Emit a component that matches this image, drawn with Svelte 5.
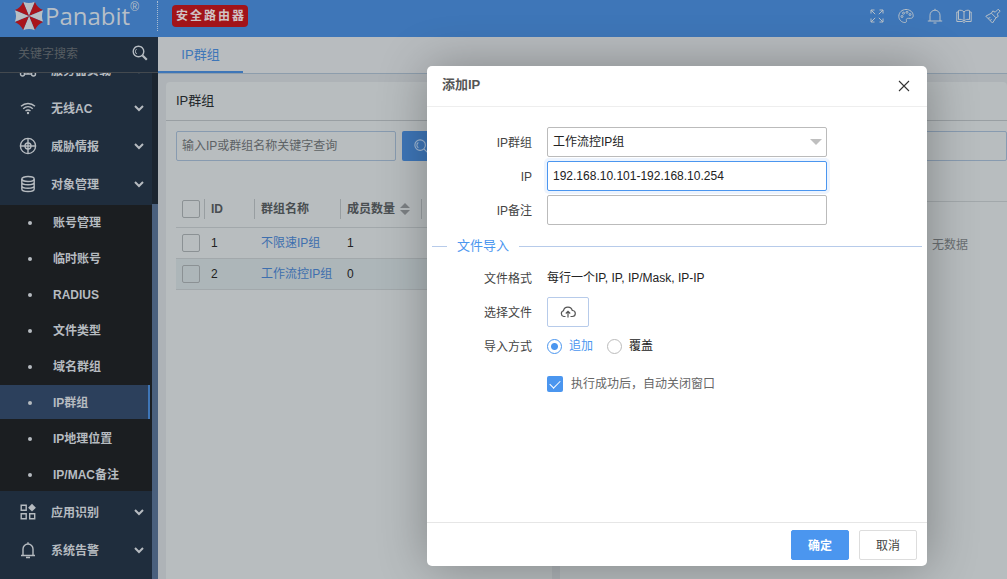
<script>
  let keyword = $state('');
  let groupKeyword = $state('');
  let remoteKeyword = $state('');
  let group = $state('工作流控IP组');
  let address = $state('192.168.10.101-192.168.10.254');
  let remark = $state('');
  let mode = $state('append');
  let autoClose = $state(true);

  const subItems = ['账号管理', '临时账号', 'RADIUS', '文件类型', '域名群组', 'IP群组', 'IP地理位置', 'IP/MAC备注'];
  const groups = [
    { id: 1, name: '不限速IP组', count: 1 },
    { id: 2, name: '工作流控IP组', count: 0 }
  ];
  // Eight wedges of the umbrella logo, one every 45 degrees.
  const wedges = [0, 45, 90, 135, 180, 225, 270, 315];
</script>

{#snippet arrow()}
  <svg class="arrow" viewBox="0 0 10 10" width="10" height="10"><path d="M1 3l4 4 4-4" fill="none" stroke="currentColor" stroke-width="2" /></svg>
{/snippet}

{#snippet item(icon, label)}
  <a class="item" href="#menu">
    <svg class="ico" viewBox="0 0 18 18" width="18" height="18" fill="none" stroke="currentColor" stroke-width="1.4">
      {#if icon === 'load'}
        <circle cx="3.5" cy="13" r="2" /><circle cx="14.5" cy="13" r="2" /><path d="M5.500 13h7M9 13V6M6 3h6v3H6z" />
      {:else if icon === 'wifi'}
        <path d="M2 7.300c4-3.800 10-3.800 14 0M4.200 9.700c2.800-2.600 6.800-2.600 9.600 0M6.500 12c1.500-1.300 3.500-1.300 5 0" /><circle cx="9" cy="14" r="1.200" fill="currentColor" stroke="none" />
      {:else if icon === 'globe'}
        <circle cx="9" cy="9" r="7.600" /><circle cx="9" cy="9" r="3" /><path d="M9 1.400v15.200M1.400 9h15.200" />
      {:else if icon === 'data'}
        <ellipse cx="9" cy="4" rx="6.200" ry="2.500" /><path d="M2.800 4v10c0 3.300 12.400 3.300 12.400 0V4M2.800 7.300c0 3.300 12.400 3.300 12.400 0M2.800 10.700c0 3.300 12.400 3.300 12.400 0" />
      {:else if icon === 'apps'}
        <path d="M2.200 2.200h5v5h-5zM2.200 10.700h5v5h-5zM10.700 10.700h5v5h-5z" /><path d="M13 .8l3.900 3.900L13 8.600 9.100 4.700z" fill="currentColor" stroke="none" />
      {:else}
        <path d="M2 14.500h14M4 14.500V8a5 5 0 0 1 10 0v6.500M9 3V1.200M7 16.500h4" />
      {/if}
    </svg>
    <span>{label}</span>
    {@render arrow()}
  </a>
{/snippet}

<div class="app">
  <header>
    <div class="brand">
      <svg viewBox="-14 -14 28 28" width="30" height="30">
        {#each wedges as angle, i}
          <path d="M0 0L-5.400 -13.200Q0 -11 5.400 -13.200Z" fill={i % 2 ? '#a9141b' : '#b9bfc4'} transform="rotate({angle})" />
        {/each}
      </svg>
      <span class="name">Panabit</span><sup>®</sup>
    </div>
    <span class="tag">安全路由器</span>
    <nav class="tools">
      <button aria-label="全屏"><svg viewBox="0 0 16 16"><path d="M2 5.500V2h3.500M2 2l4.200 4.200M10.500 2H14v3.500M14 2L9.800 6.200M2 10.500V14h3.500M2 14l4.200-4.200M14 10.500V14h-3.500M14 14L9.800 9.800" /></svg></button>
      <button aria-label="主题"><svg viewBox="0 0 16 16"><path d="M8 1.500C4 1.500.8 4.500.8 8.300c0 3.500 2.900 6.200 6 6.200 1.600 0 1.900-1 1.600-2-.4-1.500.4-2.200 2-2.200h2.200c1.600 0 2.600-.9 2.600-2.500C15.200 4 11.800 1.500 8 1.500z" /><circle cx="4" cy="8.500" r="1" /><circle cx="5.500" cy="5.200" r="1" /><circle cx="9" cy="4.300" r="1" /><circle cx="12" cy="6.500" r="1" /></svg></button>
      <button aria-label="通知"><svg viewBox="0 0 16 16"><path d="M.8 13h14.400M3 13V7.200a5 5 0 0 1 10 0V13M8 2.200V.8M6.500 15h3" /></svg></button>
      <button aria-label="手册"><svg viewBox="0 0 16 16"><path d="M8 4C6.500 2 4 2 2.500 2.500v9C4.500 11 6.500 11.500 8 13c1.500-1.500 3.500-2 5.500-1.500v-9C12 2 9.500 2 8 4zM8 4v9M2.500 4H.8v9.500h5.700L8 14.500l1.500-1h5.700V4h-1.700" /></svg></button>
      <button aria-label="清理"><svg viewBox="0 0 16 16"><path d="M15.200 3.200l-2-2-3 3L7.800 2.900 6.400 5.200l4.600 4.600 2.300-1.500-1.200-2.200zM6.400 5.200L.8 8.200 7.500 15 11 9.800M3 10.400l2.300-.8M5.300 12.700l1.200-1.700" /></svg></button>
    </nav>
  </header>

  <div class="body">
    <aside>
      <div class="find">
        <input type="text" placeholder="关键字搜索" aria-label="关键字搜索" bind:value={keyword} />
        <button aria-label="搜索"><svg viewBox="0 0 16 16" width="16" height="16" fill="none" stroke="#b6bcc2"><circle cx="6.500" cy="6.500" r="5.300" stroke-width="1.400" /><path d="M4.800 9A3 3 0 0 1 4.500 4.200" /><path d="M10.500 10.500l4.300 4.300" stroke-width="2.200" /></svg></button>
      </div>
      <div class="scroll">
        <nav class="menu">
          {@render item('load', '服务器负载')}
          {@render item('wifi', '无线AC')}
          {@render item('globe', '威胁情报')}
          {@render item('data', '对象管理')}
          <ul>
            {#each subItems as label}
              <li><a href="#sub" class:active={label === 'IP群组'}>{label}</a></li>
            {/each}
          </ul>
          {@render item('apps', '应用识别')}
          {@render item('bell', '系统告警')}
        </nav>
        <div class="rail"><div class="thumb"></div></div>
      </div>
    </aside>

    <main>
      <div class="tabs"><a href="#tab" class="tab">IP群组</a></div>
      <div class="panels">
        <section class="panel left">
          <h2>IP群组</h2>
          <div class="bar">
            <input type="text" placeholder="输入IP或群组名称关键字查询" aria-label="输入IP或群组名称关键字查询" bind:value={groupKeyword} />
            <button class="go" aria-label="查询"><svg viewBox="0 0 16 16" width="14" height="14" fill="none" stroke="#a5bcd6" stroke-width="1.200"><circle cx="7" cy="7" r="6" /><path d="M5 10a3.500 3.500 0 0 1 0-6M11.500 11.500L15 15" /></svg></button>
          </div>
          <table>
            <thead>
              <tr>
                <th class="c-check"><input type="checkbox" aria-label="全选" /></th>
                <th class="c-id">ID</th>
                <th class="c-name">群组名称</th>
                <th class="c-count">成员数量<svg viewBox="0 0 10 12" width="10" height="12" fill="#7c8184"><path d="M5 0l5 5H0zM5 12l5-5H0z" /></svg></th>
                <th></th>
              </tr>
            </thead>
            <tbody>
              {#each groups as row}
                <tr class:hover={row.id === 2}>
                  <td><input type="checkbox" aria-label={row.name} /></td>
                  <td>{row.id}</td>
                  <td><a href="#group">{row.name}</a></td>
                  <td>{row.count}</td>
                  <td></td>
                </tr>
              {/each}
            </tbody>
          </table>
        </section>
        <section class="panel right">
          <h2></h2>
          <div class="bar"><input type="text" aria-label="IP" bind:value={remoteKeyword} /></div>
          <div class="empty">无数据</div>
        </section>
      </div>
    </main>
  </div>

  <form class="dialog" role="dialog" aria-labelledby="dialog-title">
    <div class="title">
      <h3 id="dialog-title">添加IP</h3>
      <button type="button" aria-label="关闭"><svg viewBox="0 0 12 12" width="12" height="12"><path d="M1 1l10 10M11 1L1 11" stroke="#333" stroke-width="1.100" /></svg></button>
    </div>
    <div class="content">
      <div class="row">
        <label for="group">IP群组</label>
        <div class="select">
          <select id="group" bind:value={group}><option>工作流控IP组</option><option>不限速IP组</option></select>
        </div>
      </div>
      <div class="row"><label for="address">IP</label><input id="address" class="focus" type="text" bind:value={address} /></div>
      <div class="row"><label for="remark">IP备注</label><input id="remark" type="text" bind:value={remark} /></div>
      <div class="legend">文件导入</div>
      <div class="row"><span class="label">文件格式</span><span class="text">每行一个IP, IP, IP/Mask, IP-IP</span></div>
      <div class="row">
        <span class="label">选择文件</span>
        <button type="button" class="upload" aria-label="选择文件"><svg viewBox="0 0 16 14" width="16" height="14" fill="none" stroke="#555" stroke-width="1.200"><path d="M5.500 11.500H3.700A3 3 0 0 1 3.500 5.700 4.500 4.500 0 0 1 12.300 5.500 3 3 0 0 1 12.300 11.500H10.500M8 12.500V6.500M5.800 8.500L8 6.300l2.200 2.200" /></svg></button>
      </div>
      <div class="row">
        <span class="label">导入方式</span>
        <div class="options">
          <label><input type="radio" name="mode" value="append" bind:group={mode} /><span>追加</span></label>
          <label><input type="radio" name="mode" value="replace" bind:group={mode} /><span>覆盖</span></label>
        </div>
      </div>
      <label class="auto"><input type="checkbox" bind:checked={autoClose} />执行成功后，自动关闭窗口</label>
    </div>
    <div class="actions">
      <button type="button" class="ok">确定</button>
      <button type="button" class="cancel">取消</button>
    </div>
  </form>
</div>

<style>
  :global(body) { margin: 0; }
  .app, .app * { box-sizing: border-box; }
  .app {
    position: relative;
    display: flex;
    flex-direction: column;
    height: 100vh;
    overflow: hidden;
    font: 12px/18px "Liberation Sans", "Noto Sans CJK SC", sans-serif;
    color: #222;
    background: #aeb3b7;
  }
  button, input, select { font: inherit; color: inherit; margin: 0; }
  button { display: flex; align-items: center; justify-content: center; padding: 0; border: 0; background: none; }
  a { color: inherit; text-decoration: none; }
  h2, h3, ul { margin: 0; padding: 0; list-style: none; }

  header { display: flex; align-items: center; flex: none; height: 37px; padding: 0 6px 5px 0; background: #3e76b8; color: #b6bfc7; }
  .brand { display: flex; align-items: center; width: 158px; height: 30px; padding-left: 14px; border-right: 1px dotted #a9bcd2; }
  .name { margin-left: 1px; font: 24px/30px "Open Sans", sans-serif; }
  sup { font-size: 12px; line-height: 12px; align-self: flex-start; }
  .tag { margin-left: 14px; padding: 2px 2px 2px 4px; border-radius: 4px; background: #a21419; color: #d0c3c4; font-weight: bold; letter-spacing: 2px; }
  .tools { display: flex; gap: 13px; margin-left: auto; }
  .tools svg { width: 16px; height: 16px; fill: none; stroke: currentColor; stroke-width: 1; }

  .body { display: flex; flex: 1; min-height: 0; }
  aside { display: flex; flex-direction: column; flex: none; width: 158px; background: #1f2d3d; color: #b6bbc0; }
  .find { display: flex; align-items: center; flex: none; height: 36px; padding: 0 10px 2px 18px; border-bottom: 1px solid #43494f; }
  .find input { flex: 1; min-width: 0; padding: 0; border: 0; outline: 0; background: none; }
  .find input::placeholder { color: #575d62; }
  .find button { padding-bottom: 2px; }
  .scroll { display: flex; flex: 1; min-height: 0; overflow: hidden; }
  .menu { flex: 1; margin-top: -22px; font-weight: bold; }
  .item { display: flex; align-items: center; height: 38px; padding: 0 8px 0 19px; }
  .item span { flex: 1; margin-left: 14px; padding-top: 2px; }
  ul { display: grid; gap: 2px; margin: 2px 0; background: #1b1e21; }
  li a { display: flex; align-items: center; height: 34px; width: 150px; padding: 2px 0 0 28px; }
  li a::before { content: ""; width: 4px; height: 4px; margin-right: 21px; border-radius: 2px; background: #b6bbc0; }
  li .active { background: #2c405c; border-right: 2px solid #3e76b8; }
  .rail { display: flex; width: 6px; padding-top: 131px; background: #1b2530; }
  .thumb { flex: 1; background: #4a607d; }

  main { display: flex; flex-direction: column; flex: 1; min-width: 0; }
  .tabs { flex: none; height: 37px; background: #b8bcbf; border-bottom: 1px solid #8d9dac; }
  .tab { display: block; width: 85px; height: 36px; border-bottom: 2px solid #3e76b8; color: #3e76b8; font-size: 13px; line-height: 36px; text-align: center; }
  .panels { display: flex; flex: 1; gap: 8px; padding: 8px 0 0 8px; overflow: hidden; }
  .panel { background: #b8bdbf; border-radius: 4px 4px 0 0; }
  .left { width: 386px; }
  .right { flex: 1; min-width: 0; }
  h2 { height: 39px; padding-left: 10px; border-bottom: 1px solid #999fa3; font-size: 13px; font-weight: normal; line-height: 38px; color: #22272b; }
  .bar { display: flex; gap: 6px; padding: 10px; }
  .bar input { width: 220px; height: 30px; padding: 0 5px; border: 1px solid #889bb0; border-radius: 2px; background: none; }
  .bar input::placeholder { color: #5d6265; }
  .right .bar { padding: 10px 0 40px; border-bottom: 1px solid #a2a8ab; }
  .right .bar input { width: 100%; }
  .go { width: 38px; height: 30px; border-radius: 2px; background: #3e76b8; }
  .empty { padding: 34px 39px; text-align: right; color: #6a6f72; }

  table { width: 366px; margin: 20px 10px; border-collapse: collapse; table-layout: fixed; }
  th, td { height: 31px; padding: 0 0 0 6px; border-bottom: 1px solid #a2a8ab; text-align: left; }
  th { height: 36px; color: #494e51; background: linear-gradient(#989ea1, #989ea1) right 8px / 1px 20px no-repeat; }
  th:last-child { background: none; }
  th svg { margin-left: 5px; vertical-align: -2px; }
  .c-check { width: 29px; }
  .c-id { width: 50px; }
  .c-name { width: 86px; }
  .c-count { width: 81px; }
  td a { color: #3e6fae; }
  .hover { background: #adb6b9; }
  table input { appearance: none; display: block; width: 18px; height: 18px; border: 1px solid #8b9194; border-radius: 2px; }

  .dialog {
    position: absolute;
    top: 66px;
    right: 80px;
    display: flex;
    flex-direction: column;
    width: 500px;
    height: 500px;
    border-radius: 5px;
    background: #fff;
    box-shadow: 1px 1px 50px rgba(0, 0, 0, 0.3);
  }
  .title { display: flex; justify-content: space-between; height: 41px; padding: 0 17px 0 15px; border-bottom: 1px solid #eee; }
  h3 { font-size: 13px; line-height: 38px; font-weight: bold; color: #555; }
  .content { flex: 1; padding-top: 18px; }
  .row { display: flex; align-items: center; height: 34px; }
  .row > label, .label { width: 105px; margin-right: 15px; padding-top: 2px; text-align: right; color: #444; }
  .row > input, .select { width: 280px; height: 30px; }
  .row > input, select { padding: 0 5px; border: 1px solid #bbb; border-radius: 2px; outline: 0; background: #fff; }
  .row > .focus { border-color: #4b96ef; box-shadow: 0 0 0 3px #edf4fe; }
  .select { display: flex; align-items: center; }
  .select::after { content: ""; margin-left: -17px; border: 6px solid transparent; border-top-color: #bfbfbf; border-bottom: 0; pointer-events: none; }
  select { appearance: none; flex: none; width: 280px; height: 30px; }
  .legend { display: flex; align-items: center; gap: 10px; height: 34px; padding: 4px 5px 0; color: #4b96ef; font-size: 13px; }
  .legend::before, .legend::after { content: ""; height: 1px; background: #b7cbea; }
  .legend::before { width: 15px; }
  .legend::after { flex: 1; }
  .upload { width: 42px; height: 30px; border: 1px solid #b7cbea; border-radius: 2px; }
  .options { display: flex; gap: 14px; }
  .options label { display: flex; align-items: center; gap: 7px; }
  .options input { appearance: none; width: 15px; height: 15px; border: 1px solid #bbb; border-radius: 50%; }
  .options input:checked { border-color: #4b96ef; background: radial-gradient(#4b96ef 3px, #fff 4px); }
  .options input:checked + span { color: #4b96ef; }
  .auto { display: flex; align-items: center; gap: 8px; padding: 12px 0 0 120px; color: #666; }
  .auto input { appearance: none; width: 16px; height: 16px; border-radius: 2px; background: #4b96ef; }
  .auto input:checked::before { content: ""; display: block; width: 9px; height: 5px; margin: 4px 0 0 3px; border: solid #fff; border-width: 0 0 1px 1px; transform: rotate(-45deg); }
  .actions { display: flex; justify-content: flex-end; align-items: center; gap: 10px; height: 44px; padding: 0 10px; border-top: 1px solid #e6e6e6; }
  .actions button { width: 58px; height: 30px; padding-top: 2px; border: 1px solid #ddd; border-radius: 2px; color: #444; }
  .actions .ok { border-color: #4b96ef; background: #4b96ef; color: #fff; font-weight: bold; }
</style>
